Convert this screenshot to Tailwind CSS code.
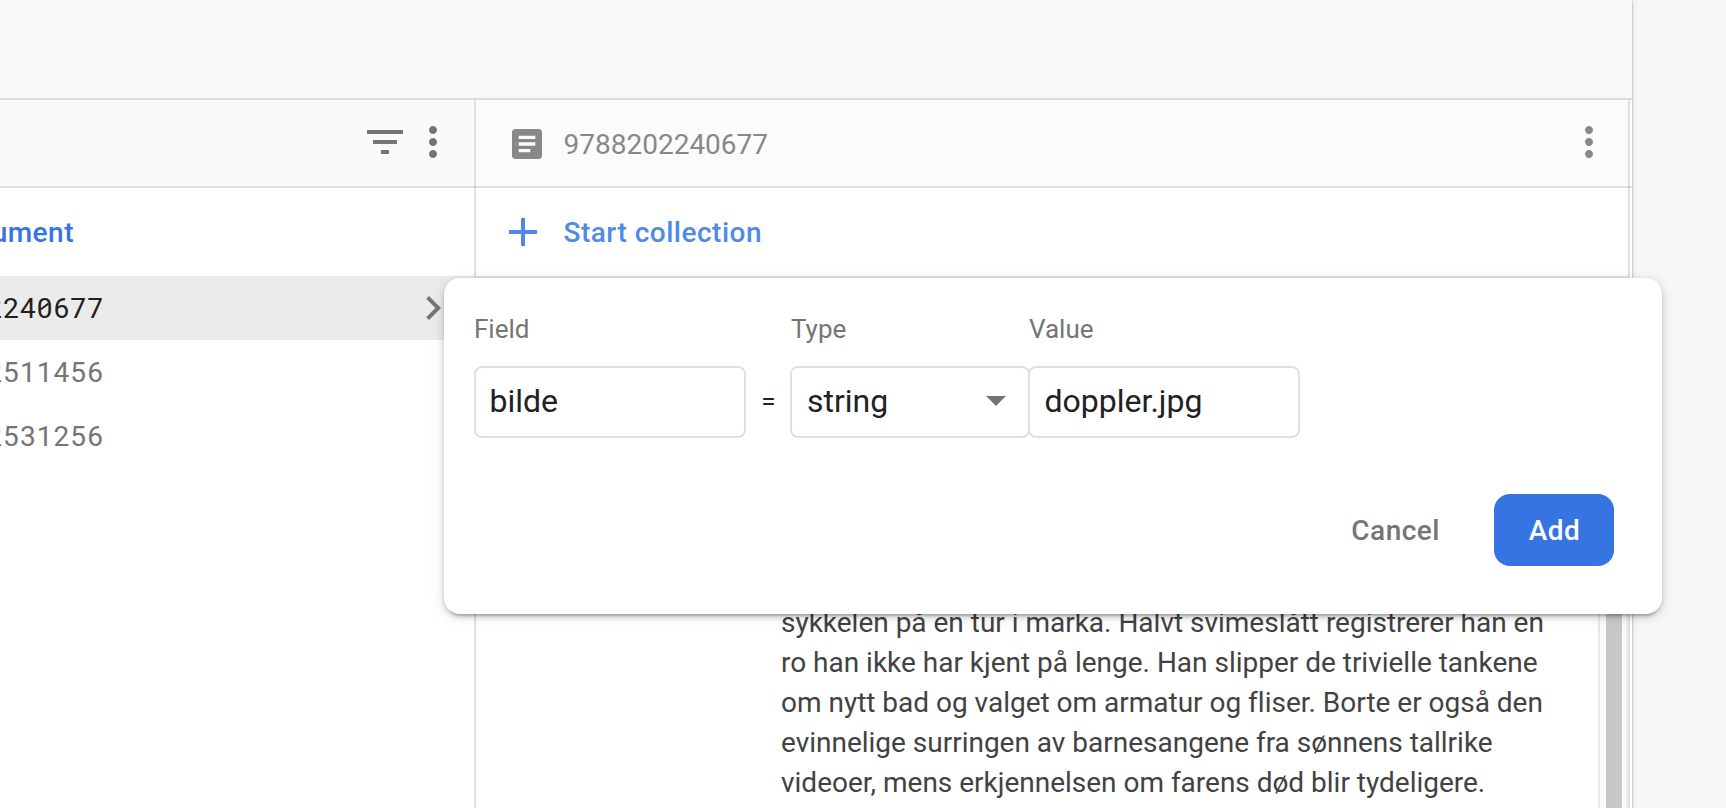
<!DOCTYPE html>
<html lang="en">
<head>
<meta charset="utf-8">
<title>Add field</title>
<script src="https://cdn.jsdelivr.net/npm/@tailwindcss/browser@4"></script>
</head>
<body class="relative h-[808px] w-[1726px] overflow-hidden bg-[#f5f7f9] font-[Roboto,sans-serif] text-[28px] text-[#212121]">
  <main class="flex h-[808px] w-[1632px] flex-col bg-white shadow-[0_0_2px_0_rgba(0,0,0,0.2),0_2px_2px_0_rgba(0,0,0,0.14),0_2px_6px_0_rgba(0,0,0,0.12)]">
    <div class="h-[100px] shrink-0 border-b-2 border-black/12 bg-[#fafafa]"></div>
    <div class="flex min-h-0 flex-1 bg-white">

      <!-- Document list -->
      <section class="flex w-[476px] shrink-0 flex-col border-r-2 border-black/12">
        <header class="flex h-[86px] shrink-0 items-center justify-end bg-[#fafafa] pr-[16.6px] pb-[2px] text-[#757575]">
          <svg class="size-12" viewBox="0 0 24 24" fill="currentColor"><path d="M10 18h4v-2h-4v2zM3 6v2h18V6H3zm3 7h12v-2H6v2z"/></svg>
          <svg class="size-12" viewBox="0 0 24 24" fill="currentColor"><path d="M12 8c1.1 0 2-.9 2-2s-.9-2-2-2-2 .9-2 2 .9 2 2 2zm0 2c-1.1 0-2 .9-2 2s.9 2 2 2 2-.9 2-2-.9-2-2-2zm0 6c-1.1 0-2 .9-2 2s.9 2 2 2 2-.9 2-2-.9-2-2-2z"/></svg>
        </header>
        <div class="-mr-[2px] h-[2px] shrink-0 bg-black/12"></div>
        <div class="flex h-[88px] w-[74px] shrink-0 items-center justify-end pt-[2px] font-medium tracking-[0.5px] whitespace-nowrap text-[#3574e2]">ument</div>
        <div class="flex h-16 shrink-0 items-center justify-between bg-[#ebebeb] pr-[16.6px] tracking-[1.08px]">
          <div class="relative flex w-[104px] justify-end pt-[2px]">2240677
            <!-- slash through the zero -->
            <svg class="absolute top-[14px] left-[40px] h-[12px] w-[9px]" viewBox="0 0 9 12" fill="none" stroke="currentColor" stroke-width="2"><path d="M0.5 9.5L8.5 3.5"/></svg>
          </div>
          <svg class="size-12 text-[#757575]" viewBox="0 0 24 24" fill="currentColor"><path d="M10 6L8.59 7.41 13.17 12l-4.58 4.59L10 18l6-6z"/></svg>
        </div>
        <div class="flex h-16 w-[104px] shrink-0 items-center justify-end pt-[2px] tracking-[1.08px] text-[#757575]">2511456</div>
        <div class="flex h-16 w-[104px] shrink-0 items-center justify-end pt-[2px] tracking-[1.08px] text-[#757575]">2531256</div>
      </section>

      <!-- Selected document -->
      <section class="flex w-[1154px] shrink-0 flex-col border-r-2 border-black/12">
        <header class="flex h-[86px] shrink-0 items-center bg-[#fbfbfb] pl-[31.3px] text-[#888888]">
          <svg class="mt-[2px] size-10" viewBox="0 0 24 24" fill="currentColor"><path d="M19 3H5c-1.1 0-2 .9-2 2v14c0 1.1.9 2 2 2h14c1.1 0 2-.9 2-2V5c0-1.1-.9-2-2-2zm-5 14H7v-2h7v2zm3-4H7v-2h10v2zm0-4H7V7h10v2z"/></svg>
          <span class="mt-1 ml-[16.2px]">9788202240677</span>
          <svg class="mr-[15px] mb-[2px] ml-auto size-12" viewBox="0 0 24 24" fill="currentColor"><path d="M12 8c1.1 0 2-.9 2-2s-.9-2-2-2-2 .9-2 2 .9 2 2 2zm0 2c-1.1 0-2 .9-2 2s.9 2 2 2 2-.9 2-2-.9-2-2-2zm0 6c-1.1 0-2 .9-2 2s.9 2 2 2 2-.9 2-2-.9-2-2-2z"/></svg>
        </header>
        <div class="-mr-1 h-[2px] shrink-0 bg-black/12"></div>
        <div class="flex h-[90px] shrink-0 items-center border-b-2 border-black/12 pl-[23.3px] font-medium tracking-[0.5px] text-[#4f8ae8]">
          <svg class="size-12" viewBox="0 0 24 24" fill="currentColor"><path d="M19 13h-6v6h-2v-6H5v-2h6V5h2v6h6v2z"/></svg>
          <span class="ml-[16.2px] pt-[2px]">Start collection</span>
        </div>
        <div class="flex min-h-0 flex-1">
          <p class="mt-[325px] ml-[305px] flex-1 leading-10 tracking-[-0.01px] whitespace-nowrap text-[#424242]">sykkelen på en tur i marka. Halvt svimeslått registrerer han en<br>ro han ikke har kjent på lenge. Han slipper de trivielle tankene<br>om nytt bad og valget om armatur og fliser. Borte er også den<br>evinnelige surringen av barnesangene fra sønnens tallrike<br>videoer, mens erkjennelsen om farens død blir tydeligere.</p>
          <div class="flex w-[30px] shrink-0 border-r-2 border-l-2 border-r-[#ededed] border-l-[#e8e8e8] bg-[#fafafa] pl-[6px]">
            <div class="w-4 bg-[#c8c8c8]"></div>
          </div>
        </div>
      </section>
    </div>
  </main>

  <!-- Add-field popup -->
  <form class="absolute top-[278px] left-[444px] flex h-[336px] w-[1218px] flex-col rounded-2xl bg-white shadow-[0_6px_2px_-4px_rgba(0,0,0,0.16),0_3px_4px_0_rgba(0,0,0,0.12),0_2px_10px_0_rgba(0,0,0,0.12),0_4px_20px_0_rgba(0,0,0,0.06)]">
    <div class="flex pt-[36px] pl-[30px]">
      <div class="flex w-[272px] flex-col">
        <label class="h-[52px] text-[26px] leading-[30px] text-[#757575]">Field</label>
        <div class="flex h-[72px] items-center rounded-lg border-2 border-[#e0e0e0] pb-[2px] pl-[13.5px] text-[32px]">bilde</div>
      </div>
      <div class="mt-[52px] flex h-[72px] w-11 items-center justify-center pb-[2px] pl-px text-[26px]">=</div>
      <div class="flex w-[240px] flex-col">
        <label class="h-[52px] pl-px text-[26px] leading-[30px] text-[#757575]">Type</label>
        <div class="flex h-[72px] items-center justify-between rounded-lg border-2 border-[#e0e0e0] pr-2 pb-[2px] pl-[15px] text-[32px]">string
          <svg class="mb-[2px] size-12 text-[#757575]" viewBox="0 0 24 24" fill="currentColor"><path d="M7 10l5 5 5-5z"/></svg>
        </div>
      </div>
      <div class="-ml-[2px] flex w-[272px] flex-col">
        <label class="h-[52px] pl-px text-[26px] leading-[30px] text-[#757575]">Value</label>
        <div class="flex h-[72px] items-center rounded-lg border-2 border-[#e0e0e0] pb-[2px] pl-[14.5px] text-[32px]">doppler.jpg</div>
      </div>
    </div>
    <div class="mt-[56px] flex items-center justify-end pr-12 font-medium tracking-[0.5px]">
      <span class="mr-[54px] pt-[2px] text-[#757575]">Cancel</span>
      <div class="flex h-[72px] w-[120px] items-center justify-center rounded-2xl bg-[#3574e2] pt-[2px] pl-px text-white">Add</div>
    </div>
  </form>
</body>
</html>
